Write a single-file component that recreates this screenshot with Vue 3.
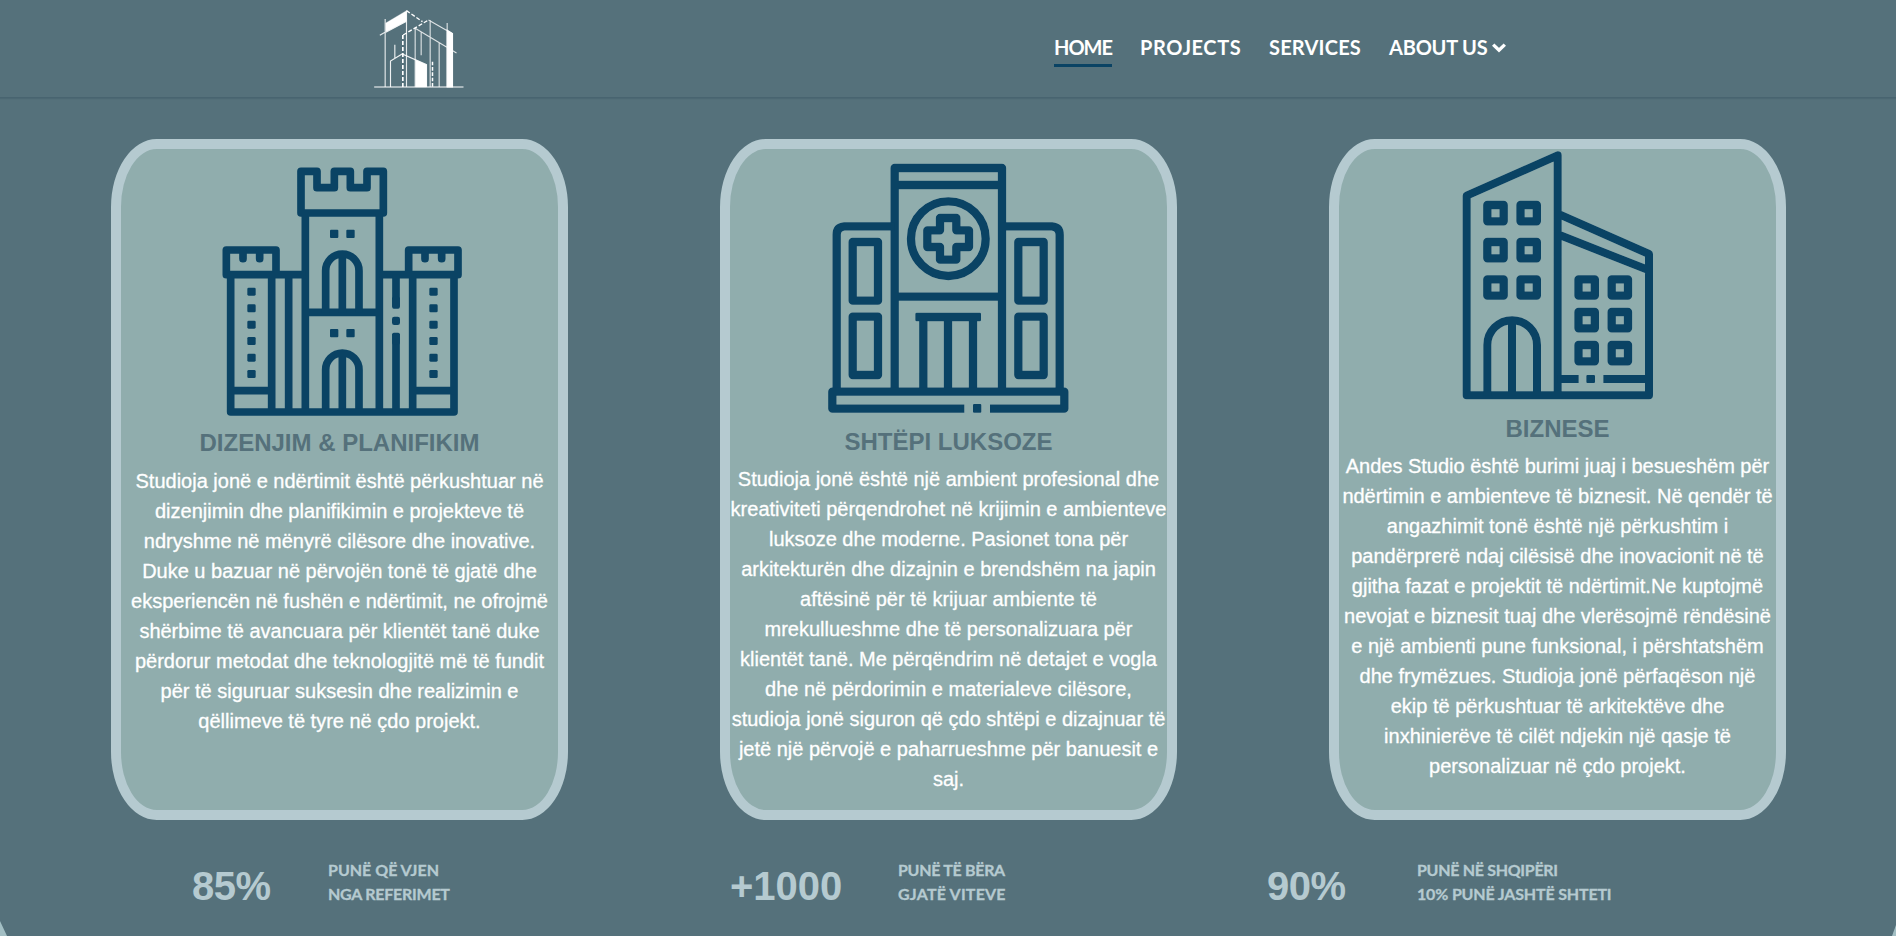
<script setup>
const nav = [
  { label: 'HOME', cls: 'home' },
  { label: 'PROJECTS', cls: 'projects' },
  { label: 'SERVICES', cls: 'services' },
  { label: 'ABOUT US', cls: 'about', menu: true },
]

const cards = [
  {
    kind: 'castle',
    title: 'DIZENJIM & PLANIFIKIM',
    lines: [
      'Studioja jonë e ndërtimit është përkushtuar në',
      'dizenjimin dhe planifikimin e projekteve të',
      'ndryshme në mënyrë cilësore dhe inovative.',
      'Duke u bazuar në përvojën tonë të gjatë dhe',
      'eksperiencën në fushën e ndërtimit, ne ofrojmë',
      'shërbime të avancuara për klientët tanë duke',
      'përdorur metodat dhe teknologjitë më të fundit',
      'për të siguruar suksesin dhe realizimin e',
      'qëllimeve të tyre në çdo projekt.',
    ],
  },
  {
    kind: 'clinic',
    title: 'SHTËPI LUKSOZE',
    lines: [
      'Studioja jonë është një ambient profesional dhe',
      'kreativiteti përqendrohet në krijimin e ambienteve',
      'luksoze dhe moderne. Pasionet tona për',
      'arkitekturën dhe dizajnin e brendshëm na japin',
      'aftësinë për të krijuar ambiente të',
      'mrekullueshme dhe të personalizuara për',
      'klientët tanë. Me përqëndrim në detajet e vogla',
      'dhe në përdorimin e materialeve cilësore,',
      'studioja jonë siguron që çdo shtëpi e dizajnuar të',
      'jetë një përvojë e paharrueshme për banuesit e',
      'saj.',
    ],
  },
  {
    kind: 'office',
    title: 'BIZNESE',
    lines: [
      'Andes Studio është burimi juaj i besueshëm për',
      'ndërtimin e ambienteve të biznesit. Në qendër të',
      'angazhimit tonë është një përkushtim i',
      'pandërprerë ndaj cilësisë dhe inovacionit në të',
      'gjitha fazat e projektit të ndërtimit.Ne kuptojmë',
      'nevojat e biznesit tuaj dhe vlerësojmë rëndësinë',
      'e një ambienti pune funksional, i përshtatshëm',
      'dhe frymëzues. Studioja jonë përfaqëson një',
      'ekip të përkushtuar të arkitektëve dhe',
      'inxhinierëve të cilët ndjekin një qasje të',
      'personalizuar në çdo projekt.',
    ],
  },
]

const stats = [
  { value: '85%', a: 'PUNË QË VJEN', b: 'NGA REFERIMET', ca: 'even', cb: 'snug' },
  { value: '+1000', a: 'PUNË TË BËRA', b: 'GJATË VITEVE', ca: 'tight', cb: 'loose' },
  { value: '90%', a: 'PUNË NË SHQIPËRI', b: '10% PUNË JASHTË SHTETI', ca: 'tight', cb: 'slight' },
]

const slits = [473, 523, 572, 621, 671, 720]
const towerRows = [225, 336, 448]
const wingRows = [448, 546, 645]
</script>

<template>
  <div class="page">
    <header class="header">
      <svg class="logo" viewBox="40 28 275 240" fill="none" stroke="#fff" stroke-width="3.4">
        <path d="M43 262H311" />
        <path d="M78 70 140 33V65L78 97Z" fill="#fff" stroke-width="1" />
        <path d="M76 58V262M60 107 78 96M140 33V262M140 65 78 98" stroke-opacity=".85" />
        <path d="M105 135V176M92 262V184L127 163 200 195V262" stroke-opacity=".9" />
        <path d="M167 180 200 195V262H167Z" fill="#fff" stroke-width="1" />
        <path d="M166 86V262M166 86 290 160M184 97V167M238 129V262M211 61V262M206 61 278 102M262 70V262" stroke-opacity=".8" />
        <path d="M262 92 278 102V262H262Z" fill="#fff" />
        <path d="M140 33 188 66M130 106 206 61" stroke-width="4" stroke-dasharray="12 6" />
        <path d="M129 106V262" stroke-width="5" stroke-dasharray="12 6" />
        <path d="M218 186V262" stroke-width="4.5" stroke-dasharray="11 5" />
      </svg>
      <nav class="nav">
        <a v-for="n in nav" :key="n.label" :class="['link', n.cls]">
          <span>{{ n.label }}</span>
          <svg v-if="n.menu" class="chev" viewBox="0 0 14 10" fill="none" stroke="#fff" stroke-width="3.4">
            <path d="M1.2 1.6 7 7.2 12.8 1.6" />
          </svg>
        </a>
      </nav>
    </header>

    <main class="cards">
      <section v-for="c in cards" :key="c.kind" :class="['card', c.kind]">
        <svg v-if="c.kind === 'castle'" class="art" viewBox="63 57 1311 837">
          <g class="ink" stroke-width="23">
            <path d="M603 249V124H651V173H703V124H751V173H801V124H850V249Z" />
            <path d="M616 249V846M838 249V846M616 547H838" />
            <path d="M677 547V422A50 50 0 0 1 777 422V547M727 372V547" />
            <path d="M677 846V719A50 50 0 0 1 777 719V846M727 669V846" />
            <path d="M379 360H528V434H379ZM515 434V846M392 782H515M392 434V846H1062V434M528 434H616M566 434V846" />
            <path d="M926 360H1074V434H926ZM938 434V846M938 782H1062M838 434H926" />
            <path d="M429 366V386M479 366V386M975 366V386M1025 366V386" stroke-linecap="round" />
            <path d="M888 434V530M888 612V846" />
          </g>
          <g class="solid">
            <rect v-for="y in slits" :key="'l' + y" x="442" :y="y" width="25" height="24" rx="4" />
            <rect v-for="y in slits" :key="'r' + y" x="988" :y="y" width="25" height="24" rx="4" />
            <rect x="690" y="299" width="25" height="25" rx="3" />
            <rect x="739" y="299" width="25" height="25" rx="3" />
            <rect x="690" y="597" width="25" height="25" rx="3" />
            <rect x="739" y="597" width="25" height="25" rx="3" />
            <rect x="876" y="560" width="24" height="25" rx="7" />
            <rect x="876.5" y="500" width="23" height="36" rx="5" />
            <rect x="876.5" y="608" width="23" height="36" rx="5" />
          </g>
        </svg>

        <svg v-else-if="c.kind === 'clinic'" class="art halo" viewBox="60 57 1311 834">
          <g class="ink" stroke-width="25">
            <path d="M554 785V114H876V785M554 165H876M554 500H876" />
            <path d="M554 289H403Q380 291 380 314V785M876 289H1026Q1049 291 1049 314V785" />
            <path d="M428 336H504V512H428ZM428 560H504V735H428ZM925 336H1001V512H925ZM925 560H1001V735H925Z" />
            <circle cx="715" cy="326" r="112" />
            <path d="M690 264H739V301H777V351H739V389H690V351H652V301H690Z" />
            <path d="M640 560V785M714 560V785M789 560V785" />
            <path d="M763 836H367V785H1063V836H840" />
          </g>
          <rect class="solid" x="616" y="548" width="197" height="26" rx="4" />
          <rect class="solid" x="789" y="822" width="25" height="26" rx="3" />
        </svg>

        <svg v-else class="art halo" viewBox="57 57 1311 795">
          <g class="ink" stroke-width="24">
            <path d="M713 796V76L440 197V796H987V372L713 251M713 313 987 421" />
            <path d="M502 796V645A74.5 74.5 0 0 1 651 645V796M576 571V796" />
            <path d="M713 747H776M850 747H987" />
          </g>
          <g class="ink" stroke-width="25">
            <template v-for="y in towerRows" :key="'t' + y">
              <rect x="502" :y="y" width="49" height="49" />
              <rect x="601.5" :y="y" width="49" height="49" />
            </template>
            <template v-for="y in wingRows" :key="'w' + y">
              <rect x="775.5" :y="y" width="49" height="49" />
              <rect x="875" :y="y" width="49" height="49" />
            </template>
          </g>
          <rect class="solid" x="799" y="735" width="26" height="24" rx="3" />
        </svg>

        <h2>{{ c.title }}</h2>
        <p><span v-for="l in c.lines" :key="l">{{ l }}</span></p>
      </section>
    </main>

    <footer class="stats">
      <template v-for="s in stats" :key="s.value">
        <strong :class="{ percent: s.value.endsWith('%') }">{{ s.value }}</strong>
        <div class="note"><span :class="s.ca">{{ s.a }}</span><span :class="s.cb">{{ s.b }}</span></div>
      </template>
    </footer>
    <i class="corner left"></i>
    <i class="corner right"></i>
  </div>
</template>

<style>
body { background: #55717b; overflow: hidden; }
</style>

<style scoped>
.page {
  position: relative;
  width: 1896px;
  height: 936px;
  overflow: hidden;
  background: #55717b;
  font-family: "Liberation Sans", Arial, sans-serif;
}
.header {
  box-sizing: border-box;
  height: 98px;
  display: flex;
  align-items: flex-start;
  padding: 9px 0 0 373px;
  border-bottom: 1px solid #486470;
  box-shadow: 0 1px 1px rgba(60, 88, 100, .35);
}
.logo { width: 92px; height: 80px; flex: none; }
.nav {
  display: flex;
  margin: 24px 0 0 589px;
  font: 700 20px/28px Lato, sans-serif;
  color: #fff;
}
.link { display: flex; align-items: flex-start; white-space: nowrap; height: 31px; }
.home { width: 58px; margin-right: 28px; border-bottom: 3px solid #0a4364; letter-spacing: -1px; }
.projects { width: 101px; margin-right: 28px; letter-spacing: .6px; }
.services { width: 92px; margin-right: 28px; letter-spacing: .2px; }
.about { letter-spacing: -.2px; }
.about span { width: 103px; }
.chev { width: 14px; height: 10px; margin-top: 10px; }

.cards { display: flex; gap: 152px; padding: 41px 0 0 111px; }
.card {
  box-sizing: border-box;
  width: 457px;
  height: 681px;
  border: 10px solid #b5cad0;
  border-radius: 10%;
  background: #90adad;
  text-align: center;
}
.art { display: block; width: 437px; height: 279px; }
.clinic .art { height: 278px; }
.office .art { height: 265px; }
.ink { fill: none; stroke: #0a4364; stroke-linejoin: round; }
.solid { fill: #0a4364; }
.halo { filter: drop-shadow(0 0 .7px rgba(225, 225, 215, .6)); }
h2 { margin: 0 0 7px; font-size: 24px; line-height: 30px; color: #55717b; white-space: nowrap; }
.castle h2 { margin-bottom: 8px; }
p { margin: 0; font-size: 20px; line-height: 30px; color: #fff; -webkit-text-stroke: .3px #fff; }
p span { display: block; white-space: nowrap; }

.stats {
  display: grid;
  grid-template-columns: 136px 402px 168px 369px 150px 260px;
  padding: 38px 0 0 192px;
  color: #b5cad0;
}
strong { font-size: 40px; line-height: 48px; margin-top: 4px; }
.percent { letter-spacing: -.5px; }
.note { font: 700 16px/24px Lato, sans-serif; white-space: nowrap; -webkit-text-stroke: .3px #b5cad0; }
.note span { display: block; }
.snug { letter-spacing: -.25px; }
.slight { letter-spacing: -.17px; }
.tight { letter-spacing: -.3px; }
.loose { letter-spacing: .2px; }
.corner { position: absolute; bottom: 0; width: 7px; height: 15px; background: #a3bfc4; }
.left { left: 0; clip-path: polygon(0 0, 50% 50%, 100% 100%, 0 100%); }
.right { right: 0; width: 4px; height: 11px; clip-path: polygon(100% 0, 100% 100%, 0 100%); }
</style>
